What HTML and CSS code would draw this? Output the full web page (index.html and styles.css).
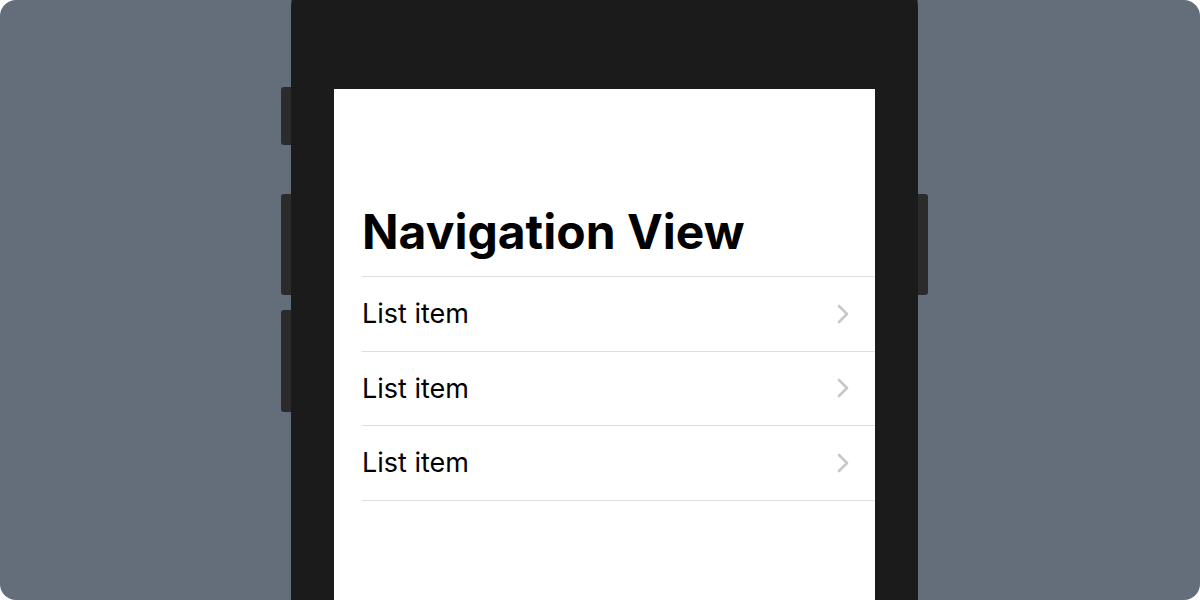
FILE: index.html
```html
<!DOCTYPE html>
<html lang="en">
<head>
<meta charset="utf-8">
<title>Navigation View</title>
<link rel="stylesheet" href="styles.css">
</head>
<body>
<div class="page">
  <div class="phone">
    <span class="btn btn-l1"></span>
    <span class="btn btn-l2"></span>
    <span class="btn btn-l3"></span>
    <span class="btn btn-r1"></span>
    <div class="screen">
      <h1 class="title">Navigation View</h1>
      <ul class="list">
        <li class="row"><span class="label">List item</span><svg class="chev" width="14" height="20" viewBox="0 0 14 20"><path d="M3 2 L11 10 L3 18" fill="none" stroke="#c7c7cc" stroke-width="2.6" stroke-linecap="round" stroke-linejoin="round"/></svg></li>
        <li class="row"><span class="label">List item</span><svg class="chev" width="14" height="20" viewBox="0 0 14 20"><path d="M3 2 L11 10 L3 18" fill="none" stroke="#c7c7cc" stroke-width="2.6" stroke-linecap="round" stroke-linejoin="round"/></svg></li>
        <li class="row"><span class="label">List item</span><svg class="chev" width="14" height="20" viewBox="0 0 14 20"><path d="M3 2 L11 10 L3 18" fill="none" stroke="#c7c7cc" stroke-width="2.6" stroke-linecap="round" stroke-linejoin="round"/></svg></li>
      </ul>
    </div>
  </div>
</div>
</body>
</html>
```

FILE: styles.css
```css
* { box-sizing: border-box; }
html, body { margin: 0; padding: 0; background: #ffffff; }
body { font-family: Inter, "Noto Sans", sans-serif; }

.page {
  width: 1200px;
  height: 600px;
  background: #646e7b;
  border-radius: 16px;
  overflow: hidden;
  display: flex;
  justify-content: flex-start;
  padding-left: 291px;
}

.phone {
  position: relative;
  width: 627px;
  height: 700px;
  margin-top: -40px;
  background: #1b1b1b;
  border-radius: 48px 48px 0 0;
  padding: 129px 43px 0 43px;
  flex: none;
}

.btn {
  position: absolute;
  width: 10px;
  background: #2b2b2b;
}
.btn-l1 { left: -10px; top: 127px; height: 58px; border-radius: 3px 0 0 3px; }
.btn-l2 { left: -10px; top: 234px; height: 101px; border-radius: 3px 0 0 3px; }
.btn-l3 { left: -10px; top: 350px; height: 102px; border-radius: 3px 0 0 3px; }
.btn-r1 { right: -10px; top: 234px; height: 101px; border-radius: 0 3px 3px 0; }

.screen {
  background: #ffffff;
  height: 100%;
  padding-left: 28px;
  padding-top: 115px;
}

.title {
  margin: 0 0 16px 0;
  font-size: 48px;
  line-height: 56px;
  font-weight: 700;
  color: #000000;
  letter-spacing: 0;
}

.list {
  list-style: none;
  margin: 0;
  padding: 0;
  border-top: 1px solid #dedede;
}

.row {
  height: 74.6px;
  border-bottom: 1px solid #dedede;
  display: flex;
  align-items: center;
  justify-content: space-between;
  padding-right: 25px;
}

.label {
  font-size: 27px;
  color: #000000;
}

.chev { display: block; }
```
